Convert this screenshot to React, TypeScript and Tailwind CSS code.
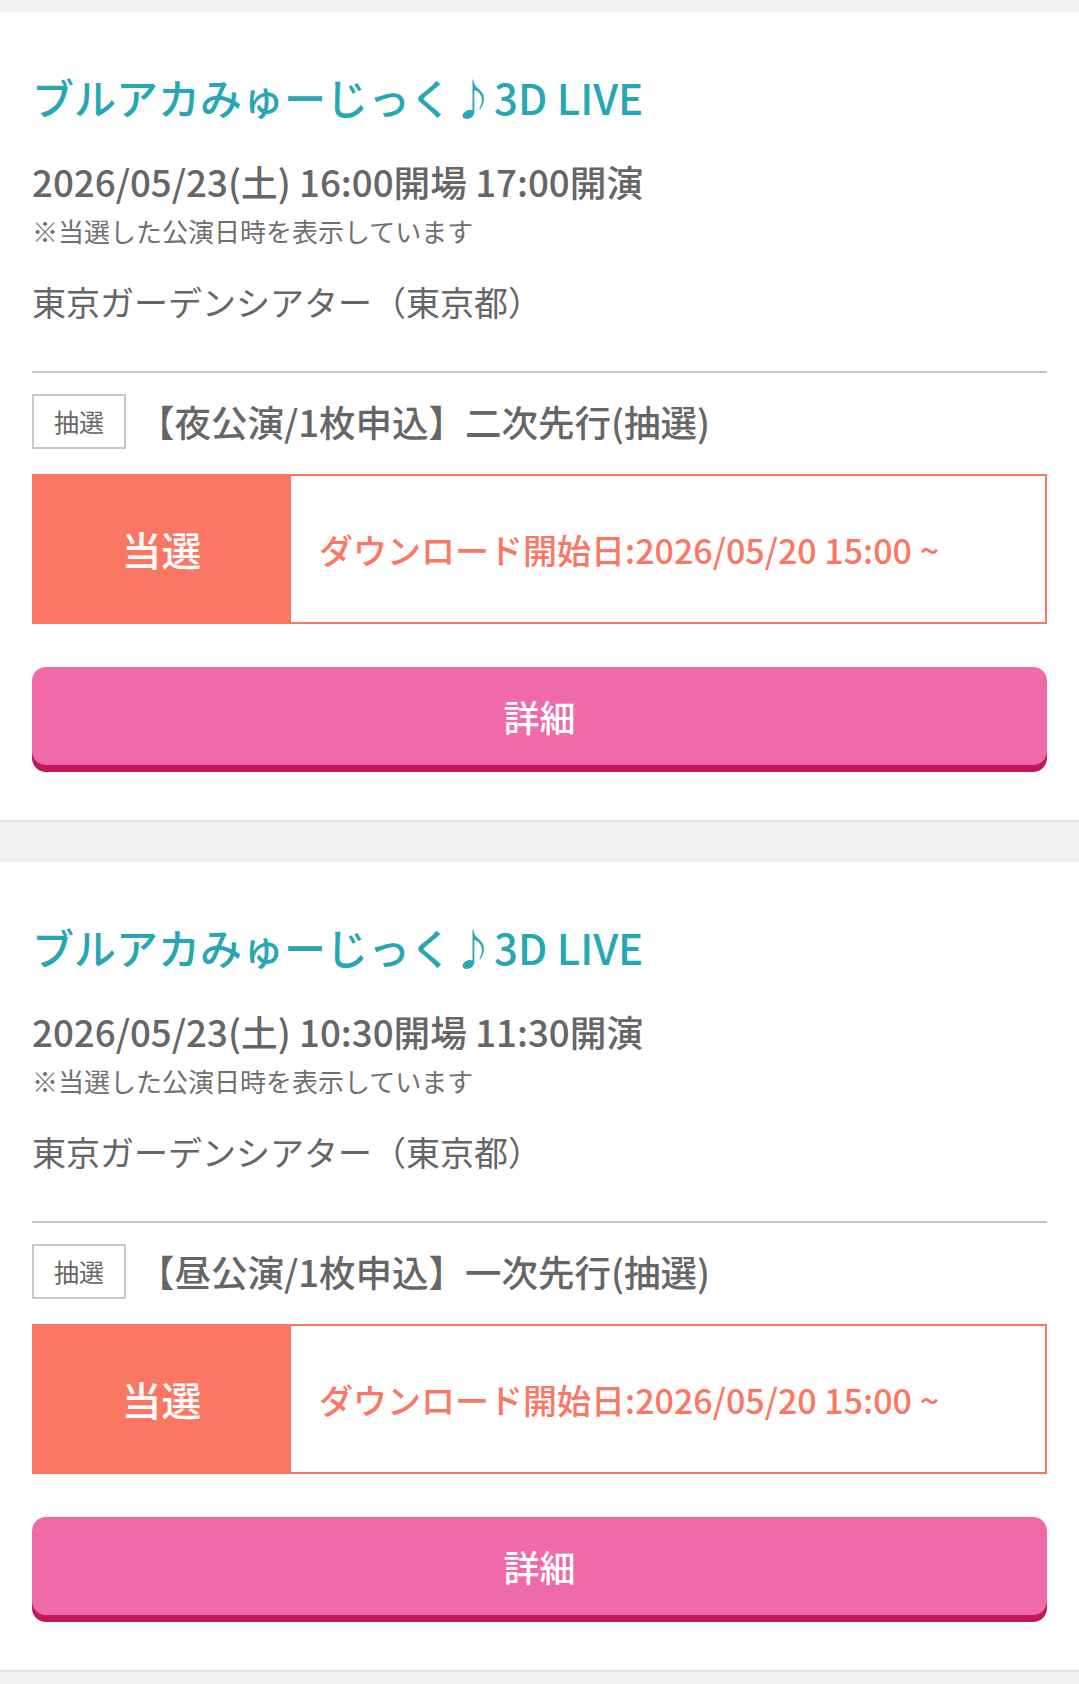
const FONT = "font-['Noto_Sans_CJK_JP','Noto_Sans',sans-serif]";

type Ticket = {
  title: string;
  date: string;
  venue: string;
  lottery: string;
  download: string;
};

const tickets: Ticket[] = [
  {
    title: "ブルアカみゅーじっく♪3D LIVE",
    date: "2026/05/23(土) 16:00開場 17:00開演",
    venue: "東京ガーデンシアター（東京都）",
    lottery: "【夜公演/1枚申込】二次先行(抽選)",
    download: "ダウンロード開始日:2026/05/20 15:00 ~",
  },
  {
    title: "ブルアカみゅーじっく♪3D LIVE",
    date: "2026/05/23(土) 10:30開場 11:30開演",
    venue: "東京ガーデンシアター（東京都）",
    lottery: "【昼公演/1枚申込】一次先行(抽選)",
    download: "ダウンロード開始日:2026/05/20 15:00 ~",
  },
];

function TicketCard({ t }: { t: Ticket }) {
  return (
    <section className="bg-white px-[32px] pt-[55px] pb-[55px] border-b-2 border-[#e4e4e4]">
      <h2 className="text-[42px] leading-[60px] text-[#27a6b3] font-medium">{t.title}</h2>
      <p className="mt-[30px] text-[36.7px] leading-[48px] text-[#666] font-medium">{t.date}</p>
      <p className="mt-[8px] text-[26px] leading-[36px] text-[#707070]">※当選した公演日時を表示しています</p>
      <p className="mt-[29px] text-[34px] leading-[48px] text-[#666]">{t.venue}</p>

      <div className="mt-[45px] h-[2px] bg-[#c6c6c6]" />

      <div className="mt-[21px] flex items-center">
        <span className="flex h-[55px] w-[94px] shrink-0 items-center justify-center border-2 border-[#c8c8c8] text-[25px] text-[#666]">
          抽選
        </span>
        <span className="ml-[12px] text-[36.5px] leading-[48px] text-[#666] font-medium">{t.lottery}</span>
      </div>

      <div className="mt-[25px] flex h-[150px]">
        <div className="flex w-[259px] shrink-0 items-center justify-center bg-[#fc7763] text-[40px] font-medium text-white">
          当選
        </div>
        <div className="flex flex-1 items-center border-2 border-l-0 border-[#fc7763] pl-[28px] text-[34px] font-medium text-[#fc7763]">
          {t.download}
        </div>
      </div>

      <button className="mt-[43px] flex h-[98px] w-full items-center justify-center rounded-[14px] bg-[#f06aa9] text-[36px] font-medium text-white shadow-[0_7px_0_#c1185c]">
        詳細
      </button>
    </section>
  );
}

export default function App() {
  return (
    <div className={`${FONT} min-h-[1684px] bg-[#f1f1f1] pt-[12px]`}>
      <div className="flex flex-col gap-[40px]">
        {tickets.map((t, i) => (
          <TicketCard key={i} t={t} />
        ))}
      </div>
    </div>
  );
}
